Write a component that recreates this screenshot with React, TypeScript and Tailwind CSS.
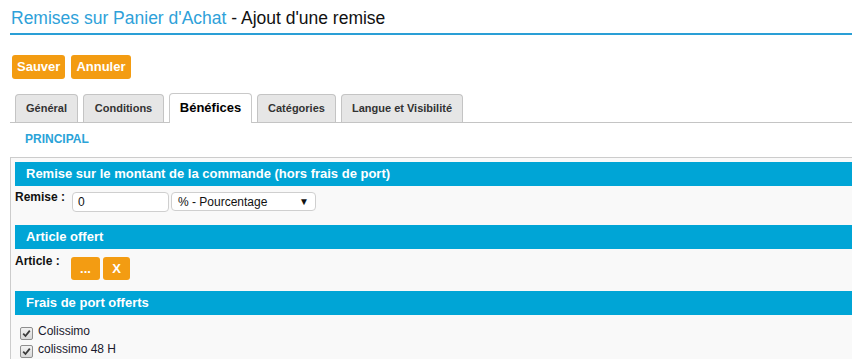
import React from 'react';

const tabs = [
  { label: 'Général', active: false, w: 'w-[63px]' },
  { label: 'Conditions', active: false, w: 'w-[81px]' },
  { label: 'Bénéfices', active: true, w: 'w-[83px]' },
  { label: 'Catégories', active: false, w: 'w-[79px]' },
  { label: 'Langue et Visibilité', active: false, w: 'w-[122px]' },
];

function SectionHeader({ title }: { title: string }) {
  return (
    <div className="h-[24px] bg-[#00a5d6] pl-[11px] text-[13px] font-bold leading-[24px] text-white">
      {title}
    </div>
  );
}

function OrangeButton({ label, className = '' }: { label: string; className?: string }) {
  return (
    <button
      className={`flex h-[23px] items-center justify-center rounded-[3px] bg-[#f39c12] text-[13px] font-bold text-white ${className}`}
    >
      {label}
    </button>
  );
}

function Checkbox() {
  return (
    <span className="mt-[3px] flex h-[13px] w-[13px] items-center justify-center rounded-[2px] border border-[#8e8e8e] bg-gradient-to-b from-[#f2f2f2] to-[#d8d8d8]">
      <svg width="9" height="9" viewBox="0 0 9 9">
        <path d="M1.2 4.6 L3.5 7 L7.8 1.6" fill="none" stroke="#3a3a3a" strokeWidth="1.8" />
      </svg>
    </span>
  );
}

export default function App() {
  return (
    <div className="h-[359px] w-[852px] overflow-hidden bg-white font-['Liberation_Sans',Arial,sans-serif] text-[#222]">
      {/* titre */}
      <div className="ml-[10px] border-b-2 border-[#2a9fd6] pb-[5px] pl-[1px] pt-[8px] text-[17.5px] leading-[20px]">
        <span className="text-[#2ea1d9]">Remises sur Panier d'Achat</span>
        <span className="text-[#111]"> - Ajout d'une remise</span>
      </div>

      {/* actions */}
      <div className="ml-[12px] mt-[20px] flex gap-[6px]">
        <OrangeButton label="Sauver" className="h-[24px] px-[5px]" />
        <OrangeButton label="Annuler" className="h-[24px] px-[5px]" />
      </div>

      {/* onglets */}
      <div className="ml-[10px] mt-[14px] flex items-end gap-[5px] border-b border-[#c4c4c4] pl-[5px]">
        {tabs.map((t) =>
          t.active ? (
            <div
              key={t.label}
              className={`-mb-px flex h-[30px] items-center justify-center rounded-t-[4px] border border-b-0 border-[#c9c9c9] bg-white pb-[2px] text-[13px] font-bold text-black ${t.w}`}
            >
              {t.label}
            </div>
          ) : (
            <div
              key={t.label}
              className={`flex h-[28px] items-center justify-center rounded-t-[4px] border border-b-0 border-[#c4c4c4] bg-[#e6e6e6] text-[11px] font-bold text-[#333] ${t.w}`}
            >
              {t.label}
            </div>
          )
        )}
      </div>

      <div className="pl-[25px] pt-[9px] text-[12px] font-bold leading-[14px] text-[#2ba3d8]">PRINCIPAL</div>

      {/* panneau */}
      <div className="ml-[10px] mt-[11px] h-[220px] border-l border-t border-[#cccccc] bg-[#f9f9f9] pl-[4px] pt-[4px]">
        <SectionHeader title="Remise sur le montant de la commande (hors frais de port)" />
        <div className="flex h-[39px] items-start pt-[4px]">
          <span className="w-[57px] text-[12px] font-bold leading-[14px] text-[#111]">Remise :</span>
          <div className="mt-[2px] flex h-[20px] w-[97px] items-center rounded-[4px] border border-[#cfcfcf] bg-white pl-[5px] text-[12px] text-[#111]">
            0
          </div>
          <div className="ml-[2px] mt-[2px] flex h-[19px] w-[145px] items-center justify-between rounded-[4px] border border-[#cfcfcf] bg-white pl-[6px] pr-[6px] text-[12px] text-[#111]">
            <span>% - Pourcentage</span>
            <span className="text-[10px] leading-none">▼</span>
          </div>
        </div>

        <SectionHeader title="Article offert" />
        <div className="flex h-[42px] items-start pt-[5px]">
          <span className="w-[56px] text-[12px] font-bold leading-[14px] text-[#111]">Article :</span>
          <div className="mt-[3px] flex gap-[3px]">
            <OrangeButton label="..." className="w-[29px]" />
            <OrangeButton label="X" className="w-[27px]" />
          </div>
        </div>

        <SectionHeader title="Frais de port offerts" />
        <div className="ml-[5px] pt-[9px] text-[12px] leading-[14px] text-[#1a1a2e]">
          {['Colissimo', 'colissimo 48 H'].map((c) => (
            <div key={c} className="flex h-[18px] items-start gap-[5px]">
              <Checkbox />
              <span>{c}</span>
            </div>
          ))}
        </div>
      </div>
    </div>
  );
}
